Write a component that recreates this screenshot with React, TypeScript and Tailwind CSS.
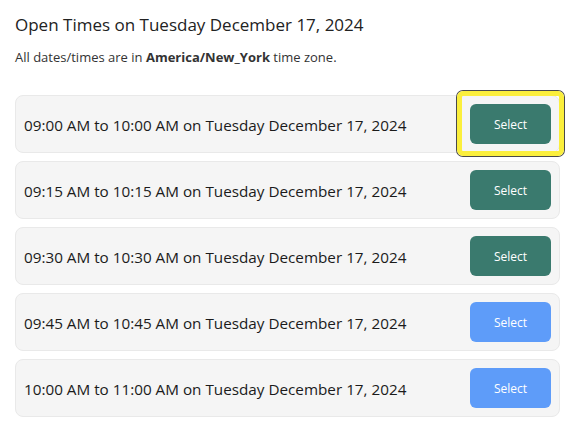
import React from 'react';

interface Slot {
    id: number;
    start: string;
    end: string;
    past: boolean;
}

const slots: Slot[] = [
    { id: 1, start: '09:00 AM', end: '10:00 AM', past: true },
    { id: 2, start: '09:15 AM', end: '10:15 AM', past: true },
    { id: 3, start: '09:30 AM', end: '10:30 AM', past: true },
    { id: 4, start: '09:45 AM', end: '10:45 AM', past: false },
    { id: 5, start: '10:00 AM', end: '11:00 AM', past: false },
];

const day = 'Tuesday December 17, 2024';

const App = () => {
    return (
        <div
            className="w-[575px] h-[425px] bg-white px-[15px] pt-[12px] text-[#222]"
            style={{ fontFamily: '"Open Sans", "Noto Sans", sans-serif' }}
        >
            <h1 className="text-[17px] leading-[26px]">Open Times on {day}</h1>
            <p className="mt-[10px] text-[13px] leading-[18px] text-[#333]">
                All dates/times are in <b className="font-bold">America/New_York</b> time zone.
            </p>

            <div className="mt-[29px] flex flex-col gap-[8px]">
                {slots.map((slot, i) => (
                    <div
                        key={slot.id}
                        className="flex items-center justify-between rounded-[8px] border border-[#e9e9e9] bg-[#f5f5f5] p-[8px]"
                    >
                        <span className="pt-[2px] text-[15.25px] text-[#1b1b1b]">
                            {slot.start} to {slot.end} on {day}
                        </span>
                        <div className="relative">
                            <button
                                className={`h-[40px] w-[81px] rounded-[6px] pt-[2px] text-[12px] text-white ${slot.past ? 'bg-[#3a7a6e]' : 'bg-[#5e9cf9]'}`}
                            >
                                Select
                            </button>
                            {/* focus highlight on the first slot */}
                            {i === 0 && (
                                <div className="pointer-events-none absolute -left-[13px] -top-[13px] -right-[13px] -bottom-[12px] rounded-[6px] border-[5px] border-[#fbef3c] ring-1 ring-[#4a4a4a]" />
                            )}
                        </div>
                    </div>
                ))}
            </div>
        </div>
    );
};

export default App;
